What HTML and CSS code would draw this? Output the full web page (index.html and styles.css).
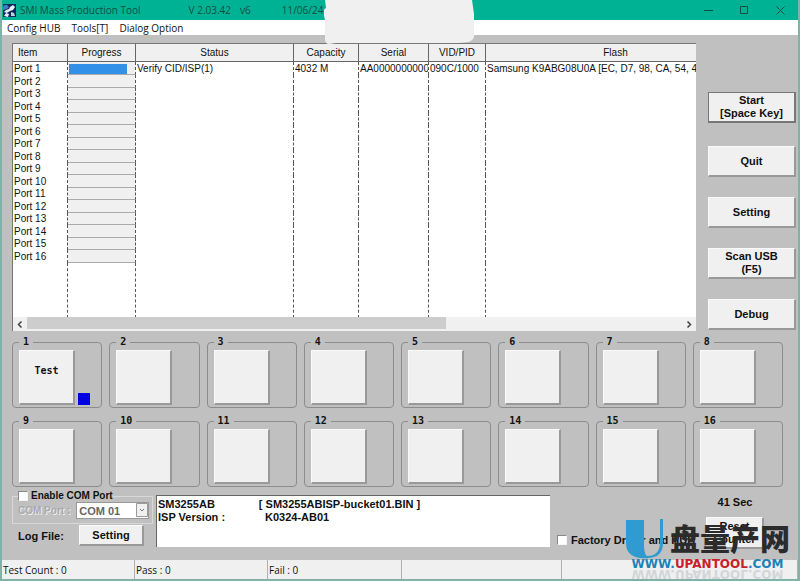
FILE: index.html
```
<!DOCTYPE html>
<html lang="en">
<head>
  <meta charset="UTF-8" />
  <meta name="viewport" content="width=device-width, initial-scale=1.0"/>
  <title>SMI Mass Production Tool</title>
  <link rel="stylesheet" href="styles.css">
</head>
<body>
  <header class="titlebar">
    <svg class="app-icon" width="13" height="13" viewBox="0 0 13 13">
      <rect width="13" height="13" fill="#10265c"/>
      <path d="M0 3q1-3 4-2l2 2-2 2-4 1z" fill="#3f7fc4"/>
      <path d="M7 3l3-2 2 2-2 3-3 1-3 2-3-1 2-2 3-1z" fill="#e8f2f4"/>
      <path d="M8 8l3 1 1 3H8z" fill="#b9d4de"/>
      <path d="M1 12l2-3 3 1-1 3z" fill="#e8f2f4"/>
    </svg>
    <span class="title">SMI Mass Production Tool</span>
    <span class="version">V 2.03.42</span>
    <span class="revision">v6</span>
    <span>11/06/24</span>
    <div class="window-buttons">
      <button aria-label="Minimize"><svg width="9" height="9" viewBox="0 0 9 9"><path d="M0 4.5h9"/></svg></button>
      <button aria-label="Maximize"><svg width="9" height="9" viewBox="0 0 9 9"><path d="M.5 .5h7v7h-7z"/></svg></button>
      <button aria-label="Close"><svg width="9" height="9" viewBox="0 0 9 9"><path d="M.5 .5l8 8M8.5 .5l-8 8"/></svg></button>
    </div>
    <svg class="blot" width="152" height="44" viewBox="0 0 152 44">
      <path d="M1 0h147l2 14v22q0 4-6 6l-10 1H12l-7 1q-4 0-4-5V20l-2-8q1-3 3-4z" fill="#f0f0f0"/>
    </svg>
  </header>

  <nav class="menubar">
    <button>Config HUB</button>
    <button>Tools[T]</button>
    <button>Dialog Option</button>
  </nav>

  <main>
    <section class="top">
      <!-- Port list -->
      <div class="list">
        <div class="list-view">
          <table>
            <colgroup>
              <col class="c-item"><col class="c-progress"><col class="c-status"><col class="c-capacity"><col class="c-serial"><col class="c-vid"><col class="c-flash">
            </colgroup>
            <thead>
              <tr><th class="first">Item</th><th>Progress</th><th>Status</th><th>Capacity</th><th>Serial</th><th>VID/PID</th><th>Flash</th></tr>
            </thead>
            <tbody>
              <tr><td>Port 1</td><td class="bar"><div class="fill"></div></td><td>Verify CID/ISP(1)</td><td>4032 M</td><td>AA00000000000</td><td>090C/1000</td><td>Samsung K9ABG08U0A [EC, D7, 98, CA, 54, 43]</td></tr>
              <tr><td>Port 2</td><td class="bar"></td><td></td><td></td><td></td><td></td><td></td></tr>
              <tr><td>Port 3</td><td class="bar"></td><td></td><td></td><td></td><td></td><td></td></tr>
              <tr><td>Port 4</td><td class="bar"></td><td></td><td></td><td></td><td></td><td></td></tr>
              <tr><td>Port 5</td><td class="bar"></td><td></td><td></td><td></td><td></td><td></td></tr>
              <tr><td>Port 6</td><td class="bar"></td><td></td><td></td><td></td><td></td><td></td></tr>
              <tr><td>Port 7</td><td class="bar"></td><td></td><td></td><td></td><td></td><td></td></tr>
              <tr><td>Port 8</td><td class="bar"></td><td></td><td></td><td></td><td></td><td></td></tr>
              <tr><td>Port 9</td><td class="bar"></td><td></td><td></td><td></td><td></td><td></td></tr>
              <tr><td>Port 10</td><td class="bar"></td><td></td><td></td><td></td><td></td><td></td></tr>
              <tr><td>Port 11</td><td class="bar"></td><td></td><td></td><td></td><td></td><td></td></tr>
              <tr><td>Port 12</td><td class="bar"></td><td></td><td></td><td></td><td></td><td></td></tr>
              <tr><td>Port 13</td><td class="bar"></td><td></td><td></td><td></td><td></td><td></td></tr>
              <tr><td>Port 14</td><td class="bar"></td><td></td><td></td><td></td><td></td><td></td></tr>
              <tr><td>Port 15</td><td class="bar"></td><td></td><td></td><td></td><td></td><td></td></tr>
              <tr><td>Port 16</td><td class="bar"></td><td></td><td></td><td></td><td></td><td></td></tr>
              <tr class="rest"><td></td><td></td><td></td><td></td><td></td><td></td><td></td></tr>
            </tbody>
          </table>
        </div>
        <div class="scrollbar">
          <button aria-label="Scroll left"><svg width="6" height="7" viewBox="0 0 6 7"><path d="M4.5 .5l-3 3 3 3"/></svg></button>
          <div class="track"><div class="thumb"></div></div>
          <button aria-label="Scroll right"><svg width="6" height="7" viewBox="0 0 6 7"><path d="M1.5 .5l3 3-3 3"/></svg></button>
        </div>
      </div>

      <div class="actions">
        <button class="btn focus">Start<br>[Space Key]</button>
        <button class="btn">Quit</button>
        <button class="btn">Setting</button>
        <button class="btn">Scan USB<br>(F5)</button>
        <button class="btn">Debug</button>
      </div>
    </section>

    <!-- Port tiles -->
    <section class="ports">
      <fieldset><legend>1</legend><button class="tile" aria-label="Port 1">Test</button><span class="led"></span></fieldset>
      <fieldset><legend>2</legend><button class="tile" aria-label="Port 2"></button></fieldset>
      <fieldset><legend>3</legend><button class="tile" aria-label="Port 3"></button></fieldset>
      <fieldset><legend>4</legend><button class="tile" aria-label="Port 4"></button></fieldset>
      <fieldset><legend>5</legend><button class="tile" aria-label="Port 5"></button></fieldset>
      <fieldset><legend>6</legend><button class="tile" aria-label="Port 6"></button></fieldset>
      <fieldset><legend>7</legend><button class="tile" aria-label="Port 7"></button></fieldset>
      <fieldset><legend>8</legend><button class="tile" aria-label="Port 8"></button></fieldset>
      <fieldset><legend>9</legend><button class="tile" aria-label="Port 9"></button></fieldset>
      <fieldset><legend>10</legend><button class="tile" aria-label="Port 10"></button></fieldset>
      <fieldset><legend>11</legend><button class="tile" aria-label="Port 11"></button></fieldset>
      <fieldset><legend>12</legend><button class="tile" aria-label="Port 12"></button></fieldset>
      <fieldset><legend>13</legend><button class="tile" aria-label="Port 13"></button></fieldset>
      <fieldset><legend>14</legend><button class="tile" aria-label="Port 14"></button></fieldset>
      <fieldset><legend>15</legend><button class="tile" aria-label="Port 15"></button></fieldset>
      <fieldset><legend>16</legend><button class="tile" aria-label="Port 16"></button></fieldset>
    </section>

    <section class="bottom">
      <div class="com">
        <fieldset class="com-group">
          <legend><input type="checkbox" id="enableCom"><label for="enableCom">Enable COM Port</label></legend>
          <label class="disabled" for="comPort">COM Port :</label>
          <div class="combo">
            <select id="comPort" disabled><option>COM 01</option></select>
            <svg class="arrow" width="12" height="14" viewBox="0 0 12 14"><path d="M.5 .5h11v13H.5z" fill="#f0f0f0" stroke="#9a9a9a"/><path d="M4 6l2 2 2-2" fill="none" stroke="#777"/></svg>
          </div>
        </fieldset>
        <div class="log">
          <span>Log File:</span>
          <button class="btn">Setting</button>
        </div>
      </div>

      <textarea class="info" aria-label="ISP information" readonly>
SM3255AB	[ SM3255ABISP-bucket01.BIN ]
ISP Version :	  K0324-AB01</textarea>

      <div class="driver">
        <input type="checkbox" id="factory"><label for="factory">Factory Driver and HUB</label>
      </div>

      <div class="counter">
        <span>41 Sec</span>
        <button class="btn">Reset<br>Counter</button>
      </div>

      <div class="brand">
        <svg class="brand-u" width="40" height="41" viewBox="0 0 40 41">
          <path d="M1 2h18v26q0 9 5 12Q1 42 1 25z" fill="#2f9bd0"/>
          <path d="M35 1h3v24q0 15-16 15v-2q13 0 13-14z" fill="#2f9bd0"/>
        </svg>
        <span class="brand-name">盘量产网</span>
        <span class="brand-url">WWW.<b>UPANTOOL</b>.COM</span>
        <span class="brand-url mirror" aria-hidden="true">WWW.UPANTOOL.COM</span>
      </div>
    </section>
  </main>

  <footer class="statusbar">
    <span>Test Count : 0</span>
    <span>Pass : 0</span>
    <span>Fail : 0</span>
    <span></span>
    <span></span>
  </footer>
</body>
</html>
```
FILE: styles.css
```
* {
  box-sizing: border-box;
}

body {
  margin: 0;
  min-height: 100vh;
  display: flex;
  flex-direction: column;
  background: #c0c0c0;
  border: solid #7fb3a8;
  border-width: 0 2px 2px;
  font-family: "Liberation Sans", Arial, sans-serif;
  font-size: 10px;
  line-height: 12px;
  color: #111;
}

button, select, textarea {
  font: inherit;
  color: inherit;
}

fieldset {
  min-width: 0;
  margin: 0;
}

/* title bar */
.titlebar {
  position: relative;
  display: flex;
  align-items: center;
  height: 20px;
  margin: 0 -2px;
  padding: 0 7px 0 3px;
  background: #00b294;
  color: #124d43;
  font-family: "Open Sans", sans-serif;
}

.title {
  margin: 0 48px 0 4px;
}

.version {
  margin-right: 9px;
}

.revision {
  margin-right: 31px;
}

.window-buttons {
  display: flex;
  gap: 10px;
  margin-left: auto;
}

.window-buttons button {
  display: flex;
  justify-content: center;
  width: 26px;
  padding: 0;
  border: none;
  background: none;
}

.window-buttons svg {
  fill: none;
  stroke: #124d43;
}

.blot {
  position: absolute;
  top: 0;
  left: 324px;
}

.menubar {
  display: flex;
  gap: 11px;
  height: 15px;
  padding: 0 5px;
  background: #fff;
  font-family: "Open Sans", sans-serif;
}

.menubar button {
  padding: 0;
  border: none;
  background: none;
}

main {
  padding: 8px 2px 0 10px;
}

/* port list */
.top {
  display: flex;
  gap: 12px;
}

.list {
  flex: 1;
  min-width: 0;
  border: solid #777;
  border-width: 1px 0 0 1px;
  background: #fff;
}

.list-view {
  height: 273px;
  overflow: hidden;
}

table {
  width: 733px;
  table-layout: fixed;
  border-collapse: separate;
  border-spacing: 0;
}

.c-item { width: 55px; }
.c-progress { width: 68px; }
.c-status { width: 158px; }
.c-capacity { width: 65px; }
.c-serial { width: 70px; }
.c-vid { width: 57px; }
.c-flash { width: 260px; }

th {
  height: 18px;
  padding: 1px 0 0;
  border: solid #666;
  border-width: 0 1px 1px 0;
  background: #f0f0f0;
  font-weight: normal;
}

th.first {
  padding-left: 5px;
  text-align: left;
}

td {
  height: 12px;
  padding: 0 0 0 1px;
  border-right: 1px dashed #555;
  white-space: nowrap;
  overflow: hidden;
}

tr:nth-child(even) td {
  height: 13px;
}

tbody tr:first-child td {
  height: 13px;
  padding-top: 1px;
}

tbody .rest td {
  height: 55px;
}

td.bar {
  border-bottom: 1px solid #aaa;
  background: #f0f0f0;
}

.fill {
  width: 88%;
  height: 10px;
  background: #3390e8;
}

.scrollbar {
  display: flex;
  height: 14px;
  background: #f0f0f0;
}

.scrollbar button {
  display: flex;
  align-items: center;
  justify-content: center;
  width: 14px;
  padding: 0;
  border: none;
  background: none;
}

.scrollbar path {
  fill: none;
  stroke: #444;
  stroke-width: 1.5;
}

.track {
  flex: 1;
}

.thumb {
  width: 64%;
  height: 12px;
  background: #cdcdcd;
}

/* push buttons */
.btn {
  padding: 0;
  border: solid;
  border-width: 1px 2px 2px 1px;
  border-color: #fafafa #999 #999 #fafafa;
  background: #f0f0f0;
  font-size: 11px;
  line-height: 13px;
  font-weight: bold;
}

.actions {
  display: flex;
  flex-direction: column;
  gap: 20px;
  width: 88px;
  padding-top: 49px;
}

.actions .btn {
  height: 31px;
}

.actions .focus {
  margin-bottom: 3px;
  border-color: #777;
}

/* port tiles */
.ports {
  display: grid;
  grid-template-columns: repeat(8, 1fr);
  gap: 7px;
  margin: 5px 13px 0 0;
  font: bold 10px/12px "DejaVu Sans Mono", monospace;
}

.ports fieldset {
  display: flex;
  align-items: flex-end;
  gap: 3px;
  padding: 2px 7px 2px 6px;
  border: 1px solid #8c8c8c;
  border-radius: 4px;
}

.ports legend {
  padding: 0 4px;
}

.tile {
  width: 56px;
  height: 55px;
  padding: 0 0 12px;
  border: solid;
  border-width: 1px 2px 2px 1px;
  border-color: #fafafa #999 #999 #fafafa;
  background: #f0f0f0;
}

.led {
  width: 12px;
  height: 12px;
  background: #0000e0;
}

/* bottom row */
.bottom {
  position: relative;
  display: flex;
  margin-top: 3px;
  font-size: 11px;
  font-weight: bold;
}

input[type="checkbox"] {
  appearance: none;
  width: 10px;
  height: 10px;
  margin: 0;
  border: 1px solid;
  border-color: #888 #f4f4f4 #f4f4f4 #888;
  background: #fff;
}

.com {
  width: 141px;
}

.com-group {
  display: flex;
  align-items: center;
  gap: 6px;
  padding: 0 3px 4px 5px;
  border: 1px solid #d8d8d8;
}

.com-group legend {
  display: flex;
  align-items: center;
  gap: 3px;
  padding: 0;
  font-size: 10px;
}

.disabled {
  color: #aaa;
  font-size: 10px;
  text-shadow: 1px 1px #eee;
  white-space: nowrap;
}

.combo {
  position: relative;
  flex: 1;
}

.combo select {
  appearance: none;
  display: block;
  width: 100%;
  height: 17px;
  padding: 0 2px;
  border: 1px solid #999;
  border-radius: 0;
  background: #fff;
  color: #666;
  opacity: 1;
}

.arrow {
  position: absolute;
  top: 1px;
  right: 1px;
}

.log {
  display: flex;
  align-items: center;
  justify-content: space-between;
  padding: 1px 9px 0 6px;
}

.log .btn {
  width: 65px;
  height: 21px;
}

.info {
  flex: 1;
  height: 52px;
  margin: 5px 0 0 3px;
  padding: 2px 1px;
  border: solid #666;
  border-width: 1px 0 0 1px;
  background: #fff;
  line-height: 13px;
  resize: none;
  outline: none;
  overflow: hidden;
  tab-size: 33;
}

.driver {
  display: flex;
  align-items: center;
  align-self: flex-end;
  gap: 4px;
  width: 148px;
  padding: 0 0 3px 7px;
  white-space: nowrap;
}

.counter {
  display: flex;
  flex-direction: column;
  gap: 9px;
  width: 58px;
  margin: 6px 32px 0 8px;
  text-align: center;
}

.counter .btn {
  height: 32px;
}

/* watermark */
.brand {
  position: absolute;
  top: 28px;
  right: 6px;
  z-index: 1;
  display: grid;
  grid-template-columns: 45px auto;
  pointer-events: none;
}

.brand-name {
  font: 900 30px/38px "Noto Sans CJK SC", sans-serif;
  color: #2b2b2b;
}

.brand-url {
  grid-column: 1 / -1;
  font: bold 12px/10px "DejaVu Sans", sans-serif;
  text-align: center;
  color: #1d82b8;
}

.brand-url b {
  color: #c8202c;
}

.mirror {
  color: #d2d6d8;
  transform: scaleY(-1);
}

/* status bar */
.statusbar {
  display: grid;
  grid-template-columns: 133px 133px 134px 160px 1fr;
  height: 19px;
  margin-top: auto;
  background: #f0f0f0;
  font-family: "Open Sans", sans-serif;
  line-height: 21px;
}

.statusbar span {
  padding-left: 1px;
  border-right: 1px solid #b0b0b0;
}
```
